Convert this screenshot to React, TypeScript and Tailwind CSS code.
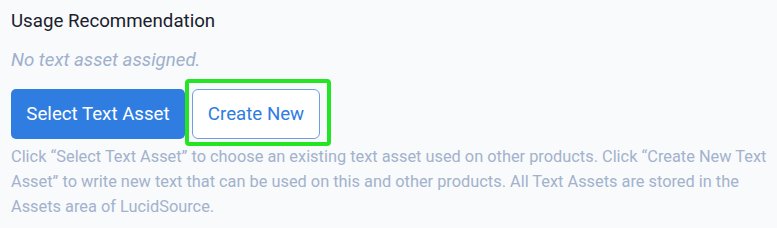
export default function App() {
  return (
    <div className="min-h-screen w-full bg-[#f8fafc] pl-[11px] pr-[6px] pt-[8px] font-['Roboto',sans-serif]">
      {/* Section title */}
      <h3 className="text-[18.7px] leading-[26px] text-[#1a202c]">Usage Recommendation</h3>

      <p className="mt-[14px] text-[18.7px] leading-[24px] italic text-[#9fb0cc]">No text asset assigned.</p>

      {/* Actions */}
      <div className="mt-[17px] flex items-center">
        <button className="h-[50px] w-[174px] rounded-[5px] bg-[#2f7de1] text-[18.7px] text-white">
          Select Text Asset
        </button>
        <div className="relative ml-[7px]">
          <button className="h-[50px] w-[128px] rounded-[6px] border border-[#6d9fe6] bg-white text-[18.7px] text-[#2f7de1]">
            Create New
          </button>
          <div className="pointer-events-none absolute left-[-7px] top-[-10px] h-[67px] w-[146px] rounded-[4px] border-[4.5px] border-[#24e524]" />
        </div>
      </div>

      <p className="mt-[5px] text-[16.35px] leading-[25px] text-[#a3b2cc]">
        Click “Select Text Asset” to choose an existing text asset used on other products. Click “Create New Text
        Asset” to write new text that can be used on this and other products. All Text Assets are stored in the
        Assets area of LucidSource.
      </p>
    </div>
  );
}
